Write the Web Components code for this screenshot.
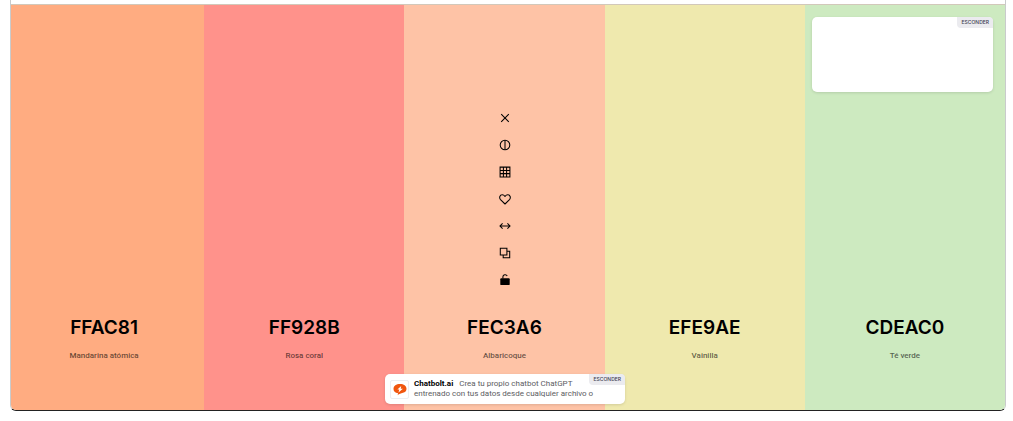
<!DOCTYPE html>
<html lang="es">
<head>
<meta charset="utf-8">
<title>Paleta</title>
<style>
body { margin: 0; background: #fff; font-family: Inter, "Liberation Sans", sans-serif; color: #000; }
</style>
</head>
<body>
<palette-window>
  <color-column hex="FFAC81" name="Mandarina atómica"></color-column>
  <color-column hex="FF928B" name="Rosa coral"></color-column>
  <color-column hex="FEC3A6" name="Albaricoque"><color-tools></color-tools></color-column>
  <color-column hex="EFE9AE" name="Vainilla"></color-column>
  <color-column hex="CDEAC0" name="Té verde"></color-column>
  <promo-card slot="corner"></promo-card>
  <promo-toast slot="toast"><b>Chatbolt.ai</b>&nbsp; Crea tu propio chatbot ChatGPT<br>entrenado con tus datos desde cualquier archivo o</promo-toast>
</palette-window>

<template id="palette-window">
<style>
:host { display: flex; flex-direction: column; box-sizing: border-box; height: 100vh; min-height: 400px; padding: 0 7px 10px 10px; }
.frame { flex: 1; display: flex; flex-direction: column; box-sizing: border-box; position: relative; overflow: hidden; border: 1px solid #c9cbcc; border-top: 0; border-bottom-color: #222; border-radius: 0 0 6px 6px; }
.bar { height: 4px; background: #fff; border-bottom: 1px solid #d2c8ba; }
.columns { flex: 1; display: grid; grid-template-columns: repeat(5, 1fr); margin-left: -7px; }
.corner { position: absolute; top: 17px; right: 12px; width: 181px; }
.toast { position: absolute; bottom: 6px; left: 0; right: 0; padding-right: 6px; display: flex; justify-content: center; }
</style>
<div class="frame">
  <div class="bar"></div>
  <main class="columns"><slot></slot></main>
  <div class="corner"><slot name="corner"></slot></div>
  <div class="toast"><slot name="toast"></slot></div>
</div>
</template>

<template id="color-column">
<style>
:host { display: flex; flex-direction: column; justify-content: flex-end; align-items: center; box-sizing: border-box; padding-bottom: 49px; background: var(--swatch); }
button { font: 600 19px/28px Inter, sans-serif; color: #000; border: 0; padding: 0; background: none; margin: 21px 0 9px; }
.name { font: 500 8px/10px Roboto, sans-serif; color: rgba(0,0,0,.6); }
</style>
<slot></slot>
<button type="button"></button>
<div class="name"></div>
</template>

<template id="color-tools">
<style>
:host { display: flex; flex-direction: column; padding-left: 2px; }
button { display: flex; align-items: center; justify-content: center; width: 28px; height: 27px; padding: 0; border: 0; background: none; color: #000; }
svg { width: 14px; height: 14px; fill: none; stroke: currentColor; stroke-width: 1.05; }
</style>
<button type="button" aria-label="Quitar"><svg viewBox="0 0 14 14"><path d="M3.2 3.2l7.6 7.6M10.8 3.2l-7.6 7.6"/></svg></button>
<button type="button" aria-label="Contraste"><svg viewBox="0 0 14 14"><circle cx="7" cy="7" r="4.8"/><path d="M7 2.3v9.4"/></svg></button>
<button type="button" aria-label="Tonos"><svg viewBox="0 0 14 14"><path d="M2.1 2.1h9.8v9.8H2.1zM5.4 2v10M8.6 2v10M2 5.4h10M2 8.6h10"/></svg></button>
<button type="button" aria-label="Guardar"><svg viewBox="0 0 14 14"><path d="M7 12L2.5 7.6C.9 5.8 1.8 2.8 4.2 2.8 5.6 2.8 6.4 3.6 7 4.5 7.6 3.6 8.4 2.8 9.8 2.8c2.4 0 3.3 3 1.7 4.8z" stroke-linejoin="round"/></svg></button>
<button type="button" aria-label="Mover"><svg viewBox="0 0 14 14"><path d="M2.2 7h9.6M4.6 4.4L2 7l2.6 2.6M9.4 4.4L12 7 9.4 9.6"/></svg></button>
<button type="button" aria-label="Copiar"><svg viewBox="0 0 14 14"><path d="M2.3 2.3h6.6v6.6H2.3zM9 5.2h2.7v6.5H5.2V9"/></svg></button>
<button type="button" aria-label="Bloquear"><svg viewBox="0 0 14 14"><rect x="2.3" y="5.3" width="9.4" height="6.8" rx=".9" fill="currentColor" stroke="none"/><path d="M4.9 5.6V3.8C4.9 1.4 8.3.9 9.2 3"/></svg></button>
</template>

<template id="hide-button">
<style>
:host { display: block; }
button { display: block; font: 500 5px/11px Inter, sans-serif; color: #3c3c50; background: #ebebef; border: 0; padding: 0 4px 0 5px; border-radius: 0 4px 0 4px; }
</style>
<button type="button">ESCONDER</button>
</template>

<template id="promo-card">
<style>
:host { display: flex; justify-content: flex-end; align-items: flex-start; height: 75px; border-radius: 5px; background: #fff; box-shadow: 0 1px 3px rgba(0,0,0,.12); }
</style>
<hide-button></hide-button>
</template>

<template id="promo-toast">
<style>
:host { display: flex; align-items: center; gap: 5px; box-sizing: border-box; position: relative; width: 240px; height: 30px; padding: 0 5px; border-radius: 5px; background: #fff; box-shadow: 0 1px 3px rgba(0,0,0,.12); }
.logo { flex: none; display: flex; align-items: center; justify-content: center; box-sizing: border-box; width: 19px; height: 19px; border: 1px solid #eceef2; border-radius: 2px; }
.logo svg { width: 14px; height: 14px; }
p { margin: 0; font: 400 8px/10px Roboto, sans-serif; color: #5c5c62; white-space: nowrap; }
::slotted(b) { font-weight: 700; color: #000; margin-right: 2px; }
hide-button { position: absolute; top: 0; right: 0; }
</style>
<span class="logo"><svg viewBox="0 0 14 14"><path d="M4.6 13.2l.5-2C2 10.9.4 9.2.5 6.7.6 3.700 3.200 2 7 2s6.500 1.800 6.500 4.700c0 2.300-1.300 3.500-3.500 4.100-2.200.6-3.800 1.200-5.400 2.400z" fill="#f0560f"/><path d="M8.200 3.900L4.400 7.500h1.900l-.8 3L9.900 6.700H7.700z" fill="#fff"/></svg></span>
<p><slot></slot></p>
<hide-button></hide-button>
</template>

<script>
class TemplateElement extends HTMLElement {
  constructor() {
    super();
    const template = document.getElementById(this.localName);
    this.attachShadow({ mode: "open" }).append(template.content.cloneNode(true));
  }
}
class ColorColumn extends TemplateElement {
  connectedCallback() {
    const hex = this.getAttribute("hex");
    this.style.setProperty("--swatch", "#" + hex);
    this.shadowRoot.querySelector("button").textContent = hex;
    this.shadowRoot.querySelector(".name").textContent = this.getAttribute("name");
  }
}
customElements.define("hide-button", class extends TemplateElement {});
customElements.define("color-tools", class extends TemplateElement {});
customElements.define("color-column", ColorColumn);
customElements.define("promo-card", class extends TemplateElement {});
customElements.define("promo-toast", class extends TemplateElement {});
customElements.define("palette-window", class extends TemplateElement {});
</script>
</body>
</html>
